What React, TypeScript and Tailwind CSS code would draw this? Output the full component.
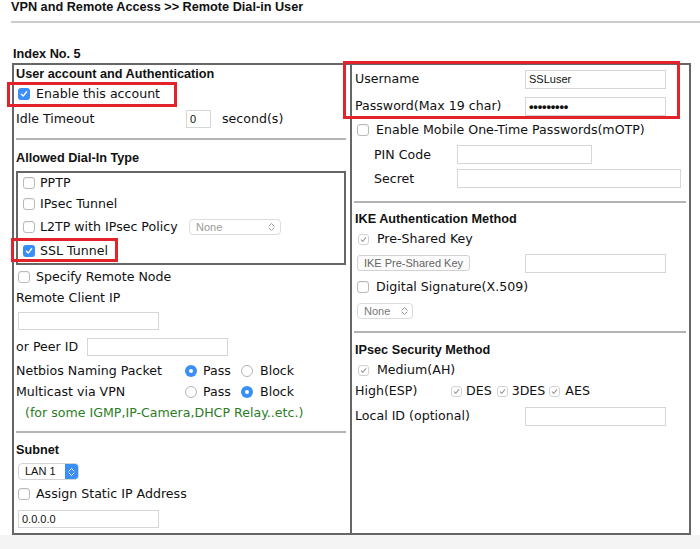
import React from "react";

const LBLB = "font-['DejaVu_Sans',Verdana,sans-serif] text-[12.6px] leading-[16px] whitespace-nowrap";
const LBL = `${LBLB} text-[#111]`;
const HEAD = "font-['Liberation_Sans',Arial,sans-serif] font-bold text-[12.7px] leading-[16px] text-[#111] whitespace-nowrap";
const SM = "font-['Liberation_Sans',Arial,sans-serif] text-[11px] leading-[13px] whitespace-nowrap";

function Check({ checked = false, disabled = false }: { checked?: boolean; disabled?: boolean }) {
  if (checked && !disabled) {
    return (
      <span className="w-[12px] h-[12px] shrink-0 rounded-[3px] bg-[#3a8ff7] flex items-center justify-center">
        <svg width="8" height="8" viewBox="0 0 8 8">
          <path d="M1.4 4.3 L3.2 6.1 L6.6 1.8" stroke="#fff" strokeWidth="1.4" fill="none" strokeLinecap="round" strokeLinejoin="round" />
        </svg>
      </span>
    );
  }
  if (checked && disabled) {
    return (
      <span className="w-[11px] h-[11px] shrink-0 rounded-[3px] border border-[#d2d2d2] bg-white flex items-center justify-center">
        <svg width="7" height="7" viewBox="0 0 8 8">
          <path d="M1.4 4.3 L3.2 6.1 L6.6 1.8" stroke="#9a9a9a" strokeWidth="1.2" fill="none" strokeLinecap="round" strokeLinejoin="round" />
        </svg>
      </span>
    );
  }
  return <span className="w-[12px] h-[12px] shrink-0 rounded-[3px] border border-[#b9b9b9] bg-white shadow-[inset_0_1px_1px_rgba(0,0,0,0.06)]" />;
}

function Radio({ checked = false }: { checked?: boolean }) {
  if (checked) {
    return (
      <span className="w-[12px] h-[12px] shrink-0 rounded-full bg-[#3a8ff7] flex items-center justify-center">
        <span className="w-[4px] h-[4px] rounded-full bg-white" />
      </span>
    );
  }
  return <span className="w-[12px] h-[12px] shrink-0 rounded-full border border-[#b3b3b3] bg-white" />;
}

function Input({ w, h = 19, children }: { w: string; h?: number; children?: React.ReactNode }) {
  return (
    <div className={`${w} ${h === 18 ? "h-[18px]" : "h-[19px]"} shrink-0 border border-[#d6d6d6] bg-white flex items-center pl-[3px] text-[#111] ${SM}`}>
      {children}
    </div>
  );
}

function UpDown({ color = "#888" }: { color?: string }) {
  return (
    <svg width="7" height="10" viewBox="0 0 7 10">
      <path d="M1 4 L3.5 1.5 L6 4" stroke={color} strokeWidth="1" fill="none" strokeLinecap="round" strokeLinejoin="round" />
      <path d="M1 6 L3.5 8.5 L6 6" stroke={color} strokeWidth="1" fill="none" strokeLinecap="round" strokeLinejoin="round" />
    </svg>
  );
}

function Sep({ cls }: { cls: string }) {
  return <div className={`h-[2px] bg-[#b4b4b4] ${cls}`} />;
}

export default function App() {
  return (
    <div className="relative w-[700px] h-[549px] bg-white flex flex-col overflow-hidden">
      {/* Title */}
      <div className="font-['Liberation_Sans',Arial,sans-serif] font-bold text-[12.7px] leading-[15px] text-[#111] whitespace-nowrap pl-[11px]">
        VPN and Remote Access &gt;&gt; Remote Dial-in User
      </div>
      <div className="mt-[6px] ml-[11px] h-[2px] bg-[#cccccc]" />
      <div className={`${HEAD} mt-[23px] pl-[13px]`}>Index No. 5</div>

      {/* Table */}
      <div className="mt-[1px] ml-[12px] w-[679px] h-[472px] border-2 border-[#666] flex">
        {/* Left cell */}
        <div className="w-[338px] border-r-2 border-[#666] flex flex-col">
          <div className={`h-[18px] pl-[2px] flex items-center ${HEAD}`}>User account and Authentication</div>
          <div className="h-[22px] pl-[4px] flex items-center gap-[6px]">
            <Check checked />
            <span className={LBL}>Enable this account</span>
          </div>
          <div className="h-[28px] pl-[2px] flex items-center">
            <span className={`w-[170px] shrink-0 ${LBL}`}>Idle Timeout</span>
            <Input w="w-[25px]" h={18}>0</Input>
            <span className={`ml-[11px] ${LBL}`}>second(s)</span>
          </div>
          <div className="h-[5px]" />
          <Sep cls="ml-[2px] mr-[4px]" />
          <div className={`h-[31px] pt-[10px] pl-[2px] ${HEAD}`}>Allowed Dial-In Type</div>
          <div className="ml-[2px] mr-[4px] h-[94px] border-2 border-[#666] flex flex-col">
            <div className="h-[20px] pl-[5px] flex items-center gap-[5px]">
              <Check />
              <span className={LBL}>PPTP</span>
            </div>
            <div className="h-[22px] pl-[5px] flex items-center gap-[5px]">
              <Check />
              <span className={LBL}>IPsec Tunnel</span>
            </div>
            <div className="h-[24px] pl-[5px] flex items-center">
              <Check />
              <span className={`ml-[5px] w-[149px] shrink-0 ${LBL}`}>L2TP with IPsec Policy</span>
              <div className="w-[92px] h-[16px] rounded-[4px] border border-[#dcdcdc] bg-white flex items-center justify-between pl-[6px] pr-[5px]">
                <span className={`${SM} text-[#9a9a9a]`}>None</span>
                <UpDown color="#9a9a9a" />
              </div>
            </div>
            <div className="h-[24px] pl-[5px] flex items-center gap-[5px]">
              <Check checked />
              <span className={LBL}>SSL Tunnel</span>
            </div>
          </div>
          <div className="h-[24px] pl-[4px] flex items-center gap-[6px]">
            <Check />
            <span className={LBL}>Specify Remote Node</span>
          </div>
          <div className="h-[18px] pl-[2px] flex items-center">
            <span className={LBL}>Remote Client IP</span>
          </div>
          <div className="h-[27px] pl-[4px] flex items-center">
            <Input w="w-[141px]" h={18} />
          </div>
          <div className="h-[26px] pl-[2px] flex items-center">
            <span className={`w-[71px] shrink-0 ${LBL}`}>or Peer ID</span>
            <Input w="w-[141px]" h={18} />
          </div>
          <div className="h-[22px] pl-[2px] flex items-center">
            <span className={`w-[169px] shrink-0 ${LBL}`}>Netbios Naming Packet</span>
            <div className="w-[56px] shrink-0 flex items-center gap-[6px]">
              <Radio checked />
              <span className={LBL}>Pass</span>
            </div>
            <div className="flex items-center gap-[7px]">
              <Radio />
              <span className={LBL}>Block</span>
            </div>
          </div>
          <div className="h-[20px] pl-[2px] flex items-center">
            <span className={`w-[169px] shrink-0 ${LBL}`}>Multicast via VPN</span>
            <div className="w-[56px] shrink-0 flex items-center gap-[6px]">
              <Radio />
              <span className={LBL}>Pass</span>
            </div>
            <div className="flex items-center gap-[7px]">
              <Radio checked />
              <span className={LBL}>Block</span>
            </div>
          </div>
          <div className="h-[22px] pl-[11px] flex items-center">
            <span className={`${LBLB} text-[#2b7d1f]`}>(for some IGMP,IP-Camera,DHCP Relay..etc.)</span>
          </div>
          <div className="h-[7px]" />
          <Sep cls="ml-[2px] mr-[4px]" />
          <div className={`h-[29px] pt-[9px] pl-[2px] ${HEAD}`}>Subnet</div>
          <div className="h-[19px] pl-[4px] flex items-center">
            <div className="w-[61px] h-[17px] rounded-[4px] border border-[#d4d4d4] bg-white flex items-stretch overflow-hidden">
              <span className={`flex-1 pl-[6px] flex items-center ${SM} text-[#111]`}>LAN 1</span>
              <span className="w-[13px] bg-[#3b8ef6] flex items-center justify-center">
                <UpDown color="#ffffff" />
              </span>
            </div>
          </div>
          <div className="h-[26px] pl-[4px] flex items-center gap-[6px]">
            <Check />
            <span className={LBL}>Assign Static IP Address</span>
          </div>
          <div className="h-[24px] pl-[4px] flex items-center">
            <Input w="w-[141px]" h={18}>0.0.0.0</Input>
          </div>
        </div>

        {/* Right cell */}
        <div className="flex-1 flex flex-col">
          <div className="h-[28px] pl-[3px] flex items-center">
            <span className={`w-[170px] shrink-0 ${LBL}`}>Username</span>
            <Input w="w-[141px]">SSLuser</Input>
          </div>
          <div className="h-[26px] pl-[3px] flex items-center">
            <span className={`w-[170px] shrink-0 ${LBL}`}>Password(Max 19 char)</span>
            <Input w="w-[141px]">
              <span className="font-['Liberation_Sans',Arial,sans-serif] text-[13px] leading-[13px] font-bold tracking-[-0.2px]">•••••••••</span>
            </Input>
          </div>
          <div className="h-[22px] pl-[5px] flex items-center gap-[7px]">
            <Check />
            <span className={LBL}>Enable Mobile One-Time Passwords(mOTP)</span>
          </div>
          <div className="h-[27px] pl-[22px] flex items-center">
            <span className={`w-[83px] shrink-0 ${LBL}`}>PIN Code</span>
            <Input w="w-[135px]" />
          </div>
          <div className="h-[21px] pl-[22px] flex items-center">
            <span className={`w-[83px] shrink-0 ${LBL}`}>Secret</span>
            <Input w="w-[224px]" />
          </div>
          <div className="h-[12px]" />
          <Sep cls="ml-[2px] mr-[3px]" />
          <div className={`h-[27px] pt-[8px] pl-[3px] ${HEAD}`}>IKE Authentication Method</div>
          <div className="h-[18px] pl-[6px] flex items-center gap-[8px]">
            <Check checked disabled />
            <span className={LBL}>Pre-Shared Key</span>
          </div>
          <div className="h-[30px] pl-[5px] flex items-center">
            <div className="w-[168px] shrink-0 flex items-center">
              <div className={`w-[113px] h-[16px] rounded-[3px] border border-[#d2d2d2] bg-[#fbfbfb] flex items-center justify-center ${SM} text-[#666]`}>
                IKE Pre-Shared Key
              </div>
            </div>
            <Input w="w-[141px]" />
          </div>
          <div className="h-[18px] pl-[5px] flex items-center gap-[7px]">
            <Check />
            <span className={LBL}>Digital Signature(X.509)</span>
          </div>
          <div className="h-[30px] pl-[5px] flex items-center">
            <div className="w-[56px] h-[16px] rounded-[4px] border border-[#dcdcdc] bg-white flex items-center justify-between pl-[6px] pr-[4px]">
              <span className={`${SM} text-[#777]`}>None</span>
              <UpDown color="#8a8a8a" />
            </div>
          </div>
          <div className="h-[5px]" />
          <Sep cls="ml-[2px] mr-[3px]" />
          <div className={`h-[28px] pt-[9px] pl-[3px] ${HEAD}`}>IPsec Security Method</div>
          <div className="h-[18px] pl-[6px] flex items-center gap-[8px]">
            <Check checked disabled />
            <span className={LBL}>Medium(AH)</span>
          </div>
          <div className="h-[24px] pl-[3px] flex items-center">
            <span className={`w-[96px] shrink-0 ${LBL}`}>High(ESP)</span>
            <Check checked disabled />
            <span className={`ml-[4px] ${LBL}`}>DES</span>
            <span className="ml-[5px]" />
            <Check checked disabled />
            <span className={`ml-[4px] ${LBL}`}>3DES</span>
            <span className="ml-[4px]" />
            <Check checked disabled />
            <span className={`ml-[5px] ${LBL}`}>AES</span>
          </div>
          <div className="h-[26px] pl-[3px] flex items-center">
            <span className={`w-[170px] shrink-0 ${LBL}`}>Local ID (optional)</span>
            <Input w="w-[141px]" />
          </div>
        </div>
      </div>

      <div className="flex-1 bg-[#f4f4f4]" />

      {/* Red annotation boxes */}
      <div className="absolute left-[7px] top-[82px] w-[170px] h-[25px] border-[3px] border-[#e3232c]" />
      <div className="absolute left-[11px] top-[238px] w-[107px] h-[24px] border-[3px] border-[#e3232c]" />
      <div className="absolute left-[343px] top-[61px] w-[337px] h-[58px] border-[3px] border-[#e3232c]" />
    </div>
  );
}
